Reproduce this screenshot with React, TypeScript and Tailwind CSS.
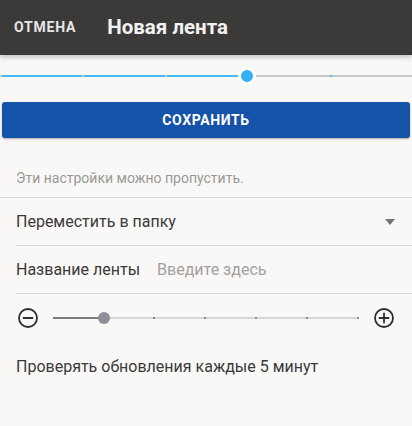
import React from 'react';

const font = { fontFamily: 'Roboto, "Noto Sans", sans-serif' };

const TopSlider: React.FC<{ value: number; steps: number }> = ({ value, steps }) => {
    const segments = Array.from({ length: steps }, (_, i) => i);
    return (
        <div className="relative h-[47px]">
            <div className="absolute left-0 right-0 top-[20px] flex h-[2px]">
                {segments.map(i => (
                    <div key={i} className={`flex flex-1 ${i < value ? 'bg-[#3fbdf5]' : 'bg-[#c9c7c5]'}`}>
                        <div className={`w-[2px] ${i < value ? 'bg-[#c9c7c5]' : 'bg-[#3fbdf5]'}`} />
                    </div>
                ))}
            </div>
            <div
                className="absolute top-[12px] h-[18px] w-[18px] -translate-x-1/2 rounded-full border-[3px] border-white bg-[#36aff3]"
                style={{ left: `${(value / steps) * 100}%` }}
            />
        </div>
    );
};

const CircleIcon: React.FC<{ plus?: boolean }> = ({ plus }) => (
    <svg width="22" height="22" viewBox="0 0 22 22" fill="none" stroke="#2e2e2e" strokeWidth="1.8" strokeLinecap="round">
        <circle cx="11" cy="11" r="9" />
        <line x1="6.5" y1="11" x2="15.5" y2="11" />
        {plus && <line x1="11" y1="6.5" x2="11" y2="15.5" />}
    </svg>
);

const IntervalSlider: React.FC<{ value: number; steps: number }> = ({ value, steps }) => {
    const segments = Array.from({ length: steps }, (_, i) => i);
    return (
        <div className="relative mx-[14px] flex h-[14px] flex-1 items-center">
            <div className="flex h-[2px] w-full">
                {segments.map(i => (
                    <div key={i} className={`flex flex-1 justify-end ${i < value ? 'bg-[#7d7d80]' : 'bg-[#d9d7d5]'}`}>
                        {i >= value && <div className="h-[2px] w-[2px] bg-[#8a8a8a]" />}
                    </div>
                ))}
            </div>
            <div
                className="absolute top-[1px] h-[12px] w-[12px] -translate-x-1/2 rounded-full bg-[#8f8f96]"
                style={{ left: `${(value / steps) * 100}%` }}
            />
        </div>
    );
};

export default function App() {
    return (
        <div className="h-[426px] w-[412px] overflow-hidden bg-[#f9f8f7]" style={font}>
            <div className="relative z-10 flex h-[55px] items-center bg-[#3c3a38] shadow-[0_2px_5px_rgba(0,0,0,0.25)]">
                <span className="ml-[14px] text-[14px] font-bold tracking-[0.8px] text-[#e6e6e6]">ОТМЕНА</span>
                <span className="ml-[31px] text-[20.5px] font-bold text-[#f2f2f2]">Новая лента</span>
            </div>

            <TopSlider value={3} steps={5} />

            <div className="mx-[2px] flex h-[36px] items-center justify-center rounded-[3px] bg-[#1453a9] shadow-[0_1px_2px_rgba(0,0,0,0.3)]">
                <span className="text-[14px] font-bold tracking-[0.6px] text-white">СОХРАНИТЬ</span>
            </div>

            <div className="h-[60px] border-b border-[#dcdad8] pl-4 pt-[31px]">
                <p className="text-[14px] leading-[18px] text-[#9a9896]">Эти настройки можно пропустить.</p>
            </div>

            <div className="ml-4 flex h-[48px] items-center justify-between border-b border-[#dcdad8] pr-[17px]">
                <span className="text-[16px] text-[#3a3a3a]">Переместить в папку</span>
                <svg width="10" height="6" viewBox="0 0 10 6"><path d="M0 0h10L5 6z" fill="#757575" /></svg>
            </div>

            <div className="ml-4 flex h-[48px] items-center border-b border-[#dcdad8]">
                <span className="text-[16px] text-[#3a3a3a]">Название ленты</span>
                <span className="ml-[17px] text-[16px] text-[#a3a19f]">Введите здесь</span>
            </div>

            <div className="flex h-[48px] items-center px-[17px]">
                <CircleIcon />
                <IntervalSlider value={1} steps={6} />
                <CircleIcon plus />
            </div>

            <div className="pl-4 pt-[16px]">
                <p className="text-[16px] leading-[18px] text-[#3a3a3a]">Проверять обновления каждые 5 минут</p>
            </div>
        </div>
    );
}
